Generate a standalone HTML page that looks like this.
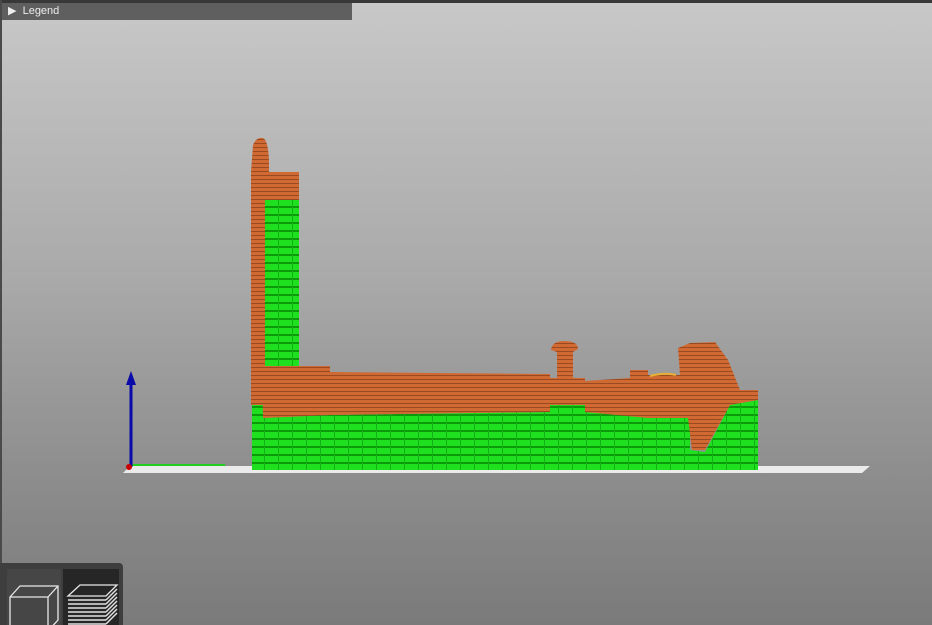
<!DOCTYPE html>
<html><head><meta charset="utf-8"><style>
html,body{margin:0;padding:0;width:932px;height:625px;overflow:hidden}
body{background:linear-gradient(#c8c8c8 0%,#a9a9a9 45%,#8e8e8e 75%,#7a7a7a 100%);position:relative;font-family:"Liberation Sans",sans-serif}
.top{position:absolute;left:0;top:0;width:932px;height:3px;background:#383838}
.lft{position:absolute;left:0;top:0;width:2px;height:625px;background:#4a4a4a}
.legend{position:absolute;left:2px;top:3px;width:350px;height:17px;background:#5f5f5f;color:#eee;font-size:11px;line-height:17px}
.legend span{margin-left:6px}
.tb{position:absolute;left:0;top:563px;width:123px;height:62px;background:#3e3e3e;border-radius:0 4px 0 0}
</style></head><body>
<div class="top"></div><div class="lft"></div>
<div class="legend"><span>▶</span>&nbsp;&nbsp;Legend</div>
<svg width="932" height="625" style="position:absolute;left:0;top:0">
<defs>
<pattern id="or" width="8" height="4" patternUnits="userSpaceOnUse"><rect width="8" height="4" fill="#d06a32"/><rect y="3" width="8" height="1" fill="#9a4a20"/></pattern>
<pattern id="gr" width="14" height="8" patternUnits="userSpaceOnUse"><rect width="14" height="8" fill="#1ee01e"/><rect y="6" width="14" height="2" fill="#0c9a0c"/><rect x="12" width="1" height="8" fill="#12b012"/></pattern>
</defs>
<polygon points="123,473 130,466 870,466 862,473" fill="#ebebeb"/>
<polygon points="252,405 263,405 263,418 330,415 550,412 550,405 585,405 585,412 640,416 690,418 690,450 705,452 730,405 758,400 758,470 252,470" fill="url(#gr)"/>
<rect x="265" y="200" width="34" height="167" fill="url(#gr)"/>
<path d="M251,172 L253,145 Q256,137 263,138 Q268,140 269,160 L269,172 L299,172 L299,200 L265,200 L265,367 L263,405 L251,405 Z" fill="url(#or)"/>
<polygon points="262,366 330,366 330,372 550,374 550,378 585,378 585,381 630,378 630,370 648,370 648,375 680,375 678,348 690,343 715,342 728,360 740,390 758,390 758,400 730,405 705,450 692,450 688,418 648,418 585,412 585,405 550,405 550,412 330,415 263,418" fill="url(#or)"/>
<path d="M557,378 L557,352 L551,350 Q552,341 564,341 Q578,341 578,349 L573,352 L573,378 Z" fill="url(#or)"/>
<path d="M650,376 Q665,372 676,375" stroke="#e8b030" stroke-width="2" fill="none"/>
<line x1="131" y1="465" x2="225" y2="465" stroke="#22cc22" stroke-width="2"/>
<line x1="131" y1="467" x2="131" y2="383" stroke="#0a0aaa" stroke-width="3"/>
<polygon points="131,371 126,385 136,385" fill="#0a0aaa"/>
<circle cx="129" cy="467" r="3" fill="#c00"/>
</svg>
<div class="tb"></div>
<svg width="123" height="62" style="position:absolute;left:0;top:563px">
<rect x="7" y="6" width="54" height="56" fill="#464646"/>
<rect x="63" y="6" width="56" height="56" fill="#262626"/>
<g stroke="#e8e8e8" stroke-width="1.3" fill="none">
<polygon points="10,34 20,23 58,23 58,57 48,68 10,68"/>
<polyline points="10,34 48,34 58,23"/><line x1="48" y1="34" x2="48" y2="68"/>
<polygon points="68,33 80,22 117,22 106,33"/>
</g>
<g stroke="#e0e0e0" stroke-width="1.5">
<line x1="68" y1="37" x2="106" y2="37"/><line x1="68" y1="41" x2="106" y2="41"/><line x1="68" y1="45" x2="106" y2="45"/><line x1="68" y1="49" x2="106" y2="49"/><line x1="68" y1="53" x2="106" y2="53"/><line x1="68" y1="57" x2="106" y2="57"/><line x1="68" y1="61" x2="106" y2="61"/>
<line x1="106" y1="37" x2="117" y2="26"/><line x1="106" y1="41" x2="117" y2="30"/><line x1="106" y1="45" x2="117" y2="34"/><line x1="106" y1="49" x2="117" y2="38"/><line x1="106" y1="53" x2="117" y2="42"/><line x1="106" y1="57" x2="117" y2="46"/><line x1="106" y1="61" x2="117" y2="50"/>
</g>
</svg>
</body></html>
